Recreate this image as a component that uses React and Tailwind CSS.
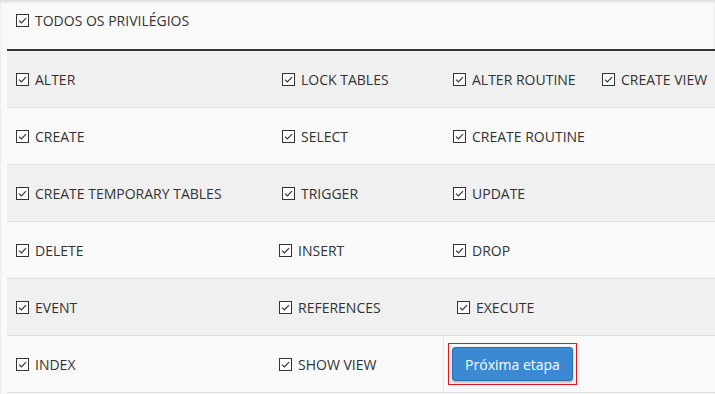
const rows = [
  { bg: "bg-[#f0f0f0]", widths: ["w-[266px]", "w-[171px]", "w-[149px]"], items: ["ALTER", "LOCK TABLES", "ALTER ROUTINE", "CREATE VIEW"] },
  { bg: "bg-[#f9f9f9]", widths: ["w-[266px]", "w-[171px]", "w-[149px]"], items: ["CREATE", "SELECT", "CREATE ROUTINE"] },
  { bg: "bg-[#f0f0f0]", widths: ["w-[266px]", "w-[171px]", "w-[149px]"], items: ["CREATE TEMPORARY TABLES", "TRIGGER", "UPDATE"] },
  { bg: "bg-[#f9f9f9]", widths: ["w-[263px]", "w-[174px]", "w-[149px]"], items: ["DELETE", "INSERT", "DROP"] },
  { bg: "bg-[#f0f0f0]", widths: ["w-[263px]", "w-[178px]", "w-[149px]"], items: ["EVENT", "REFERENCES", "EXECUTE"] },
];

const Check = () => (
  <svg width="13" height="13" viewBox="0 0 13 13" className="shrink-0">
    <rect x="0.5" y="0.5" width="12" height="12" fill="#fff" stroke="#333" />
    <path d="M3 6.6 L5.4 9 L10 4.2" fill="none" stroke="#333" strokeWidth="1.2" />
  </svg>
);

const Item = ({ label, className = "" }) => (
  <label className={"flex items-center gap-[6px] pl-[9px] " + className}>
    <Check />
    <span className="whitespace-nowrap">{label}</span>
  </label>
);

export default function App() {
  return (
    <div
      className="h-[394px] w-[715px] overflow-hidden bg-[#fafafa] text-[14px] text-[#333] shadow-[inset_0_2px_3px_rgba(0,0,0,0.12)]"
      style={{ fontFamily: '"Open Sans", "Liberation Sans", sans-serif' }}
    >
      <div className="ml-[7px]">
        <div className="flex h-[51px] items-center pb-[8px] border-b-2 border-[#333]">
          <Item label="TODOS OS PRIVILÉGIOS" className="pl-[8px]" />
        </div>
        {rows.map((row, i) => (
          <div key={i} className={"flex h-[57px] items-center border-b border-[#ddd] " + row.bg}>
            {row.items.map((label, j) => (
              <div key={label} className={row.widths[j] || "flex-1"}>
                <Item label={label} />
              </div>
            ))}
          </div>
        ))}
        <div className="flex h-[57px] items-center border-b border-[#ddd] bg-[#f9f9f9]">
          <div className="w-[263px]">
            <Item label="INDEX" />
          </div>
          <div className="flex h-full w-[174px] items-center border-r border-[#e6e6e6]">
            <Item label="SHOW VIEW" />
          </div>
          <div className="pl-[4px]">
            <div className="border border-[#e8151b] p-[3px]">
              <button
                type="button"
                className="h-[34px] w-[121px] rounded-[3px] border border-[#2f6fae] bg-[#3a89d2] text-[14px] text-white shadow-[0_2px_3px_rgba(0,0,0,0.25)]"
              >
                Próxima etapa
              </button>
            </div>
          </div>
        </div>
      </div>
    </div>
  );
}
